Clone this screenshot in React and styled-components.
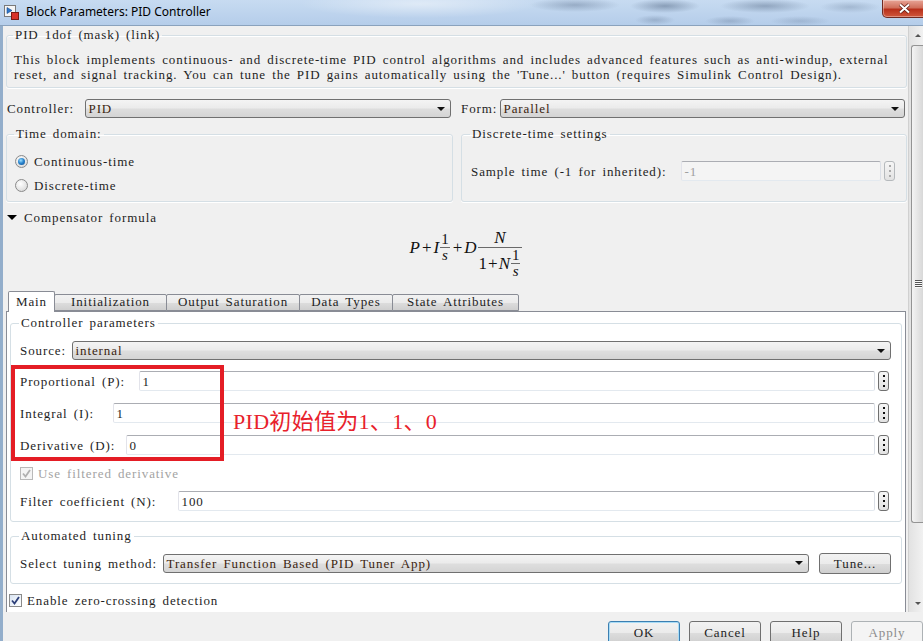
import styled, { createGlobalStyle, css } from "styled-components";

const GlobalStyle = createGlobalStyle`
  *, *::before, *::after { box-sizing: border-box; }
  html, body { margin: 0; padding: 0; background: #f0f0f0; }
`;

// SimSun-like look: serif text spread out to ~6.5px per character
const CELL = 6.5;
const simsun = css`
  font-family: "Liberation Serif", "Times New Roman", serif;
  font-size: 13px;
  letter-spacing: 0.9px;
  word-spacing: 2px;
  line-height: 15px;
  color: #1e1e1e;
`;

const Window = styled.div`
  width: 923px;
  height: 641px;
  overflow: hidden;
  display: flex;
  flex-direction: column;
  background: #f0f0f0;
`;

const TitleBar = styled.div`
  flex: none;
  height: 26px;
  display: flex;
  align-items: flex-start;
  border-bottom: 1px solid #8aa2bd;
  background:
    radial-gradient(ellipse 45px 7px at 575px 5px, rgba(70, 90, 120, 0.35), transparent),
    radial-gradient(ellipse 35px 7px at 665px 6px, rgba(50, 70, 100, 0.4), transparent),
    radial-gradient(ellipse 45px 7px at 765px 6px, rgba(50, 70, 100, 0.35), transparent),
    radial-gradient(ellipse 30px 6px at 850px 7px, rgba(70, 90, 120, 0.25), transparent),
    radial-gradient(ellipse 20px 5px at 655px 20px, rgba(60, 80, 110, 0.25), transparent),
    radial-gradient(ellipse 25px 5px at 730px 21px, rgba(60, 80, 110, 0.25), transparent),
    radial-gradient(ellipse 30px 5px at 800px 21px, rgba(60, 80, 110, 0.2), transparent),
    radial-gradient(ellipse 120px 14px at 420px 4px, rgba(255, 255, 255, 0.45), transparent),
    linear-gradient(180deg, #c7dbf1 0%, #b5cdea 100%);
`;

const TitleIcon = styled.svg`
  flex: none;
  margin: 5px 0 0 4px;
`;

const TitleText = styled.span`
  margin-left: 7px;
  font-family: "Noto Sans", "Liberation Sans", sans-serif;
  font-size: 12px;
  line-height: 24px;
  color: #000;
`;

const CloseButton = styled.div`
  flex: none;
  margin-left: auto;
  margin-right: -3px;
  width: 44px;
  height: 18px;
  display: flex;
  align-items: center;
  justify-content: center;
  border: 1px solid #6f2a22;
  border-top: none;
  border-radius: 0 0 0 5px;
  background: linear-gradient(180deg, #e8a597 0%, #d0705c 45%, #b8301b 55%, #d0573c 100%);
  box-shadow: inset 0 0 0 1px rgba(255, 255, 255, 0.35);
`;

const Frame = styled.div`
  flex: 1;
  min-height: 0;
  display: flex;
  flex-direction: column;
  border-left: 3px solid #93aecb;
`;

const Body = styled.div`
  flex: 1;
  min-height: 0;
  display: flex;
`;

const Scroller = styled.div`
  flex: 1;
  min-width: 0;
  overflow: hidden;
  display: flex;
  flex-direction: column;
  background: #f0f0f0;
  ${simsun}
`;

const Group = styled.fieldset`
  margin: 0;
  min-width: 0;
  border: 1px solid #d5dfe5;
  border-radius: 3px;
  box-shadow: 0 1px 0 #fff, inset 0 1px 0 #fff;
  padding: ${(p) => p.$pad || "8px 8px 4px 8px"};
`;

const Legend = styled.legend`
  padding: 0 2px;
  margin-left: -1px;
  line-height: 14px;
  color: #1e1e1e;
`;

const DescGroup = styled(Group)`
  margin: 2px 1px 0 3px;
`;

const DescLine = styled.div`
  white-space: nowrap;
  line-height: 15px;
`;

const TopGrid = styled.div`
  display: grid;
  grid-template-columns: 447px 446px;
  column-gap: 8px;
  row-gap: 9px;
  margin: 11px 1px 0 3px;
`;

const Row = styled.div`
  display: flex;
  align-items: center;
  height: ${(p) => p.$h || 20}px;
  margin-top: ${(p) => p.$mt || 0}px;
  padding-left: ${(p) => p.$pl || 0}px;
  padding-right: ${(p) => p.$pr || 0}px;
`;

// label box keeps the width of the original fixed-cell text
const Label = styled.span`
  flex: none;
  width: ${(p) => (p.$cells ? `${p.$cells * CELL}px` : "auto")};
  white-space: nowrap;
  color: ${(p) => (p.$disabled ? "#a3a3a3" : "#1e1e1e")};
`;

const Select = styled.div`
  flex: 1;
  height: 19px;
  margin-left: 6px;
  margin-right: ${(p) => p.$mr || 0}px;
  display: flex;
  align-items: center;
  justify-content: space-between;
  padding: 0 5px 0 3px;
  border: 1px solid #707070;
  border-radius: 3px;
  background: linear-gradient(180deg, #f4f4f4 0%, #ebebeb 48%, #dedede 52%, #d4d4d4 100%);
`;

const SelectValue = styled.span`
  color: #3b1f10;
`;

const DownArrow = styled.span`
  width: 0;
  height: 0;
  border-left: 4px solid transparent;
  border-right: 4px solid transparent;
  border-top: 4px solid #111;
`;

const TextBox = styled.div`
  flex: 1;
  height: 20px;
  margin: 0 3px 0 8px;
  display: flex;
  align-items: center;
  padding-left: 3px;
  border: 1px solid;
  border-color: #abadb3 #dbdfe6 #e3e9ef #e2e3ea;
  border-radius: 2px;
  background: ${(p) => (p.$disabled ? "#f4f4f4" : "#fff")};
  color: ${(p) => (p.$disabled ? "#a0a0a0" : "#1e1e1e")};
`;

const DotsButton = styled.div`
  flex: none;
  width: 11px;
  height: 20px;
  display: flex;
  align-items: center;
  justify-content: center;
  border: 1px solid ${(p) => (p.$disabled ? "#b5b9bc" : "#707070")};
  border-radius: 3px;
  background: linear-gradient(180deg, #f6f6f6, #e2e2e2);
`;

const RadioRow = styled.label`
  display: flex;
  align-items: center;
  gap: 6px;
  height: 24px;
`;

const RadioCircle = styled.span`
  flex: none;
  width: 13px;
  height: 13px;
  border-radius: 50%;
  border: 1px solid #8a8a8a;
  background: radial-gradient(circle at 40% 35%, #ffffff 0%, #e4e4e4 60%, #cfcfcf 100%);
  display: flex;
  align-items: center;
  justify-content: center;
  &::after {
    content: "";
    display: ${(p) => (p.$checked ? "block" : "none")};
    width: 7px;
    height: 7px;
    border-radius: 50%;
    background: radial-gradient(circle at 40% 35%, #9ee0ff 0%, #2b86cf 45%, #0d4a8c 100%);
  }
`;

const CheckRow = styled.label`
  display: flex;
  align-items: center;
  gap: 5px;
  height: 18px;
  margin-top: ${(p) => p.$mt || 0}px;
  margin-left: ${(p) => p.$ml || 0}px;
  color: ${(p) => (p.$disabled ? "#a3a3a3" : "#1e1e1e")};
`;

const CheckBox = styled.span`
  flex: none;
  width: 13px;
  height: 13px;
  display: flex;
  align-items: center;
  justify-content: center;
  border: 1px solid ${(p) => (p.$disabled ? "#b9b9b9" : "#8a8a8a")};
  background: ${(p) =>
    p.$disabled ? "#f4f4f4" : "linear-gradient(135deg, #d9e4f2 0%, #ffffff 100%)"};
`;

const SectionToggle = styled.div`
  display: flex;
  align-items: center;
  gap: 7px;
  height: 14px;
  margin: 8px 0 0 4px;
`;

const ToggleArrow = styled.span`
  width: 0;
  height: 0;
  border-left: 5px solid transparent;
  border-right: 5px solid transparent;
  border-top: 5px solid #000;
`;

const Formula = styled.div`
  flex: none;
  height: 56px;
  margin-top: 4px;
  padding: 0 0 18px 22px;
  display: flex;
  align-items: center;
  justify-content: center;
  font-family: "Liberation Serif", "Times New Roman", serif;
  font-size: 17px;
  letter-spacing: 0;
  word-spacing: 0;
  color: #111;
`;

const MathVar = styled.i`
  font-style: italic;
`;

const MathOp = styled.span`
  margin: 0 ${(p) => (p.$tight ? 1 : 2)}px;
`;

const Frac = styled.span`
  display: inline-flex;
  flex-direction: column;
  align-items: center;
  margin: 0 1px;
  font-size: ${(p) => (p.$small ? "15px" : "17px")};
`;

const FracPart = styled.span`
  display: flex;
  align-items: ${(p) => (p.$top ? "flex-end" : "center")};
  justify-content: center;
  height: ${(p) => p.$h}px;
  line-height: ${(p) => (p.$top ? 18 : p.$h)}px;
  padding: 0 1px;
`;

const FracBar = styled.span`
  align-self: stretch;
  height: 1px;
  background: #6a6a6a;
`;

const TabStrip = styled.div`
  flex: none;
  display: flex;
  align-items: flex-end;
  height: 20px;
  margin: 7px 0 0 5px;
  position: relative;
  z-index: 1;
`;

const Tab = styled.div`
  flex: none;
  width: ${(p) => p.$w}px;
  height: ${(p) => (p.$active ? 21 : 17)}px;
  margin-bottom: ${(p) => (p.$active ? -1 : 0)}px;
  margin-left: ${(p) => (p.$first ? 0 : -1)}px;
  display: flex;
  align-items: center;
  justify-content: center;
  padding-bottom: 2px;
  border: 1px solid #898c95;
  border-bottom: ${(p) => (p.$active ? "none" : "1px solid #898c95")};
  border-radius: 2px 2px 0 0;
  background: ${(p) =>
    p.$active ? "#fff" : "linear-gradient(180deg, #f2f2f2 0%, #ebebeb 50%, #dddddd 51%, #cfcfcf 100%)"};
`;

const TabPanel = styled.div`
  flex: 1;
  position: relative;
  margin: 0 2px 0 3px;
  padding: 4px 3px 0;
  border: 1px solid #898c95;
  border-bottom: none;
  background: #fff;
`;

const PanelGroup = styled(Group)`
  margin-top: ${(p) => p.$mt || 0}px;
  box-shadow: none;
`;

const Annotation = styled.div`
  position: absolute;
  left: 4px;
  top: 53px;
  width: 213px;
  height: 96px;
  border: 4px solid #e41d25;
  pointer-events: none;
`;

const AnnotationText = styled.span`
  position: absolute;
  left: 226px;
  top: 97px;
  font-family: "Liberation Serif", "Noto Sans CJK SC", serif;
  font-size: 22px;
  line-height: 26px;
  letter-spacing: 0.3px;
  word-spacing: 0;
  color: #e8212b;
  white-space: nowrap;
`;

const DlgButton = styled.div`
  flex: none;
  width: 72px;
  height: ${(p) => p.$h || 23}px;
  margin-left: ${(p) => p.$ml || 0}px;
  display: flex;
  align-items: center;
  justify-content: center;
  border: 1px solid #707070;
  border-radius: 3px;
  background: linear-gradient(180deg, #f2f2f2 0%, #ebebeb 50%, #dddddd 51%, #cfcfcf 100%);
  ${(p) =>
    p.$variant === "default" &&
    css`
      border-color: #3c7fb1;
      box-shadow: inset 0 0 0 1px #a9dcf6;
    `}
  ${(p) =>
    p.$variant === "disabled" &&
    css`
      border-color: #adb2b5;
      background: #f4f4f4;
      color: #8c8c8c;
    `}
`;

const ButtonBar = styled.div`
  flex: none;
  height: 29px;
  overflow: hidden;
  display: flex;
  justify-content: flex-end;
  align-items: flex-start;
  gap: 9px;
  padding-top: 9px;
  background: #f0f0f0;
  ${simsun}
`;

const ScrollBar = styled.div`
  flex: none;
  width: 15px;
  display: flex;
  flex-direction: column;
  background: linear-gradient(90deg, #e2e2e2 0%, #f1f1f1 100%);
  border-left: 1px solid #d0d0d0;
`;

const ScrollArrow = styled.div`
  flex: none;
  height: 18px;
  display: flex;
  align-items: center;
  justify-content: center;
  padding-left: 4px;
  &::after {
    content: "";
    width: 0;
    height: 0;
    border-left: 3px solid transparent;
    border-right: 3px solid transparent;
    ${(p) => (p.$down ? "border-top: 3px solid #555;" : "border-bottom: 3px solid #555;")}
  }
`;

const ScrollThumb = styled.div`
  flex: none;
  height: 478px;
  margin: 1px 0 0 2px;
  display: flex;
  align-items: center;
  justify-content: center;
  border: 1px solid #949494;
  border-right: none;
  border-radius: 3px 0 0 3px;
  background: linear-gradient(90deg, #f4f4f4 0%, #e6e6e6 50%, #d8d8d8 100%);
`;

const Grip = styled.span`
  width: 7px;
  height: 8px;
  margin-left: 2px;
  background: repeating-linear-gradient(180deg, #555 0, #555 1px, #fafafa 1px, #fafafa 2px);
`;

const Spacer = styled.div`
  flex: 1;
`;

const Dots = ({ color = "#111" }) => (
  <svg width="2" height="12" viewBox="0 0 2 12">
    <rect x="0" y="0" width="2" height="2" fill={color} />
    <rect x="0" y="5" width="2" height="2" fill={color} />
    <rect x="0" y="10" width="2" height="2" fill={color} />
  </svg>
);

const Check = ({ color }) => (
  <svg width="9" height="9" viewBox="0 0 9 9">
    <path d="M1 4.5 L3.5 7.5 L8 1" fill="none" stroke={color} strokeWidth="1.8" />
  </svg>
);

const ParamRow = ({ label, value, mt }) => (
  <Row $mt={mt} $pr={1}>
    <Label $cells={label.length}>{label}</Label>
    <TextBox>{value}</TextBox>
    <DotsButton>
      <Dots />
    </DotsButton>
  </Row>
);

const SelectRow = ({ label, value, h = 19, mr, children, ...rest }) => (
  <Row $h={h} {...rest}>
    <Label $cells={label.length}>{label}</Label>
    <Select $mr={mr}>
      <SelectValue>{value}</SelectValue>
      <DownArrow />
    </Select>
    {children}
  </Row>
);

const SmallFrac = ({ num, den }) => (
  <Frac $small>
    <FracPart $h={15}>{num}</FracPart>
    <FracBar />
    <FracPart $h={15}>
      <MathVar>{den}</MathVar>
    </FracPart>
  </Frac>
);

const tabs = [
  { name: "Main", w: 47 },
  { name: "Initialization", w: 113 },
  { name: "Output Saturation", w: 134 },
  { name: "Data Types", w: 94 },
  { name: "State Attributes", w: 127 },
];

const App = () => {
  return (
    <Window>
      <GlobalStyle />
      <TitleBar>
        <TitleIcon width="15" height="15" viewBox="0 0 15 15">
          <rect x="0.5" y="0.5" width="11" height="11" fill="#f6f6f6" stroke="#7a7a7a" />
          <path d="M3 2.5 L3 8.5 L8 5.5 Z" fill="#2f76c9" stroke="#1d4f8f" strokeWidth="0.6" />
          <rect x="7.5" y="7.5" width="7" height="7" fill="#d8322a" stroke="#7c1a14" />
        </TitleIcon>
        <TitleText>Block Parameters: PID Controller</TitleText>
        <CloseButton>
          <svg width="13" height="11" viewBox="0 0 13 11">
            <path d="M2 1.5 L11 9.5 M11 1.5 L2 9.5" stroke="#5a1a12" strokeWidth="3.4" />
            <path d="M2 1.5 L11 9.5 M11 1.5 L2 9.5" stroke="#fff" strokeWidth="2" />
          </svg>
        </CloseButton>
      </TitleBar>

      <Frame>
        <Body>
          <Scroller>
            <DescGroup $pad="10px 8px 5px 7px">
              <Legend>PID 1dof (mask) (link)</Legend>
              <DescLine>
                This block implements continuous- and discrete-time PID control algorithms and
                includes advanced features such as anti-windup, external
              </DescLine>
              <DescLine>
                reset, and signal tracking. You can tune the PID gains automatically using the
                'Tune...' button (requires Simulink Control Design).
              </DescLine>
            </DescGroup>

            <TopGrid>
              <SelectRow label="Controller:" value="PID" $pl={1} $pr={2} />
              <SelectRow label="Form:" value="Parallel" $pr={2} />

              <Group $pad="8px 8px 4px 8px">
                <Legend>Time domain:</Legend>
                <RadioRow>
                  <RadioCircle $checked />
                  Continuous-time
                </RadioRow>
                <RadioRow>
                  <RadioCircle />
                  Discrete-time
                </RadioRow>
              </Group>
              <Group $pad="20px 11px 0 9px">
                <Legend>Discrete-time settings</Legend>
                <Row>
                  <Label $cells={31}>Sample time (-1 for inherited):</Label>
                  <TextBox $disabled>-1</TextBox>
                  <DotsButton $disabled>
                    <Dots color="#aaa" />
                  </DotsButton>
                </Row>
              </Group>
            </TopGrid>

            <SectionToggle>
              <ToggleArrow />
              Compensator formula
            </SectionToggle>

            <Formula>
              <MathVar>P</MathVar>
              <MathOp>+</MathOp>
              <MathVar>I</MathVar>
              <SmallFrac num="1" den="s" />
              <MathOp>+</MathOp>
              <MathVar>D</MathVar>
              <Frac>
                <FracPart $h={31} $top>
                  <MathVar>N</MathVar>
                </FracPart>
                <FracBar />
                <FracPart $h={31}>
                  1<MathOp $tight>+</MathOp>
                  <MathVar>N</MathVar>
                  <SmallFrac num="1" den="s" />
                </FracPart>
              </Frac>
            </Formula>

            <TabStrip>
              {tabs.map((t, i) => (
                <Tab key={t.name} $w={t.w} $active={i === 0} $first={i === 0}>
                  {t.name}
                </Tab>
              ))}
            </TabStrip>

            <TabPanel>
              <PanelGroup $pad="11px 11px 10px 9px">
                <Legend>Controller parameters</Legend>
                <SelectRow label="Source:" value="internal" mr={-1} />
                <ParamRow label="Proportional (P):" value="1" mt={11} />
                <ParamRow label="Integral (I):" value="1" mt={12} />
                <ParamRow label="Derivative (D):" value="0" mt={12} />
                <CheckRow $mt={9} $disabled>
                  <CheckBox $disabled>
                    <Check color="#b0b0b0" />
                  </CheckBox>
                  Use filtered derivative
                </CheckRow>
                <ParamRow label="Filter coefficient (N):" value="100" mt={9} />
              </PanelGroup>

              <PanelGroup $mt={7} $pad="10px 10px 10px 9px">
                <Legend>Automated tuning</Legend>
                <SelectRow
                  label="Select tuning method:"
                  value="Transfer Function Based (PID Tuner App)"
                  h={20}
                >
                  <DlgButton $h={21} $ml={10}>
                    Tune...
                  </DlgButton>
                </SelectRow>
              </PanelGroup>

              <CheckRow $mt={7} $ml={-1}>
                <CheckBox>
                  <Check color="#2c3e78" />
                </CheckBox>
                Enable zero-crossing detection
              </CheckRow>

              <Annotation />
              <AnnotationText>PID初始值为1、1、0</AnnotationText>
            </TabPanel>
          </Scroller>

          <ScrollBar>
            <ScrollArrow />
            <ScrollThumb>
              <Grip />
            </ScrollThumb>
            <Spacer />
            <ScrollArrow $down />
          </ScrollBar>
        </Body>

        <ButtonBar>
          <DlgButton $variant="default">OK</DlgButton>
          <DlgButton>Cancel</DlgButton>
          <DlgButton>Help</DlgButton>
          <DlgButton $variant="disabled">Apply</DlgButton>
        </ButtonBar>
      </Frame>
    </Window>
  );
};

export default App;
